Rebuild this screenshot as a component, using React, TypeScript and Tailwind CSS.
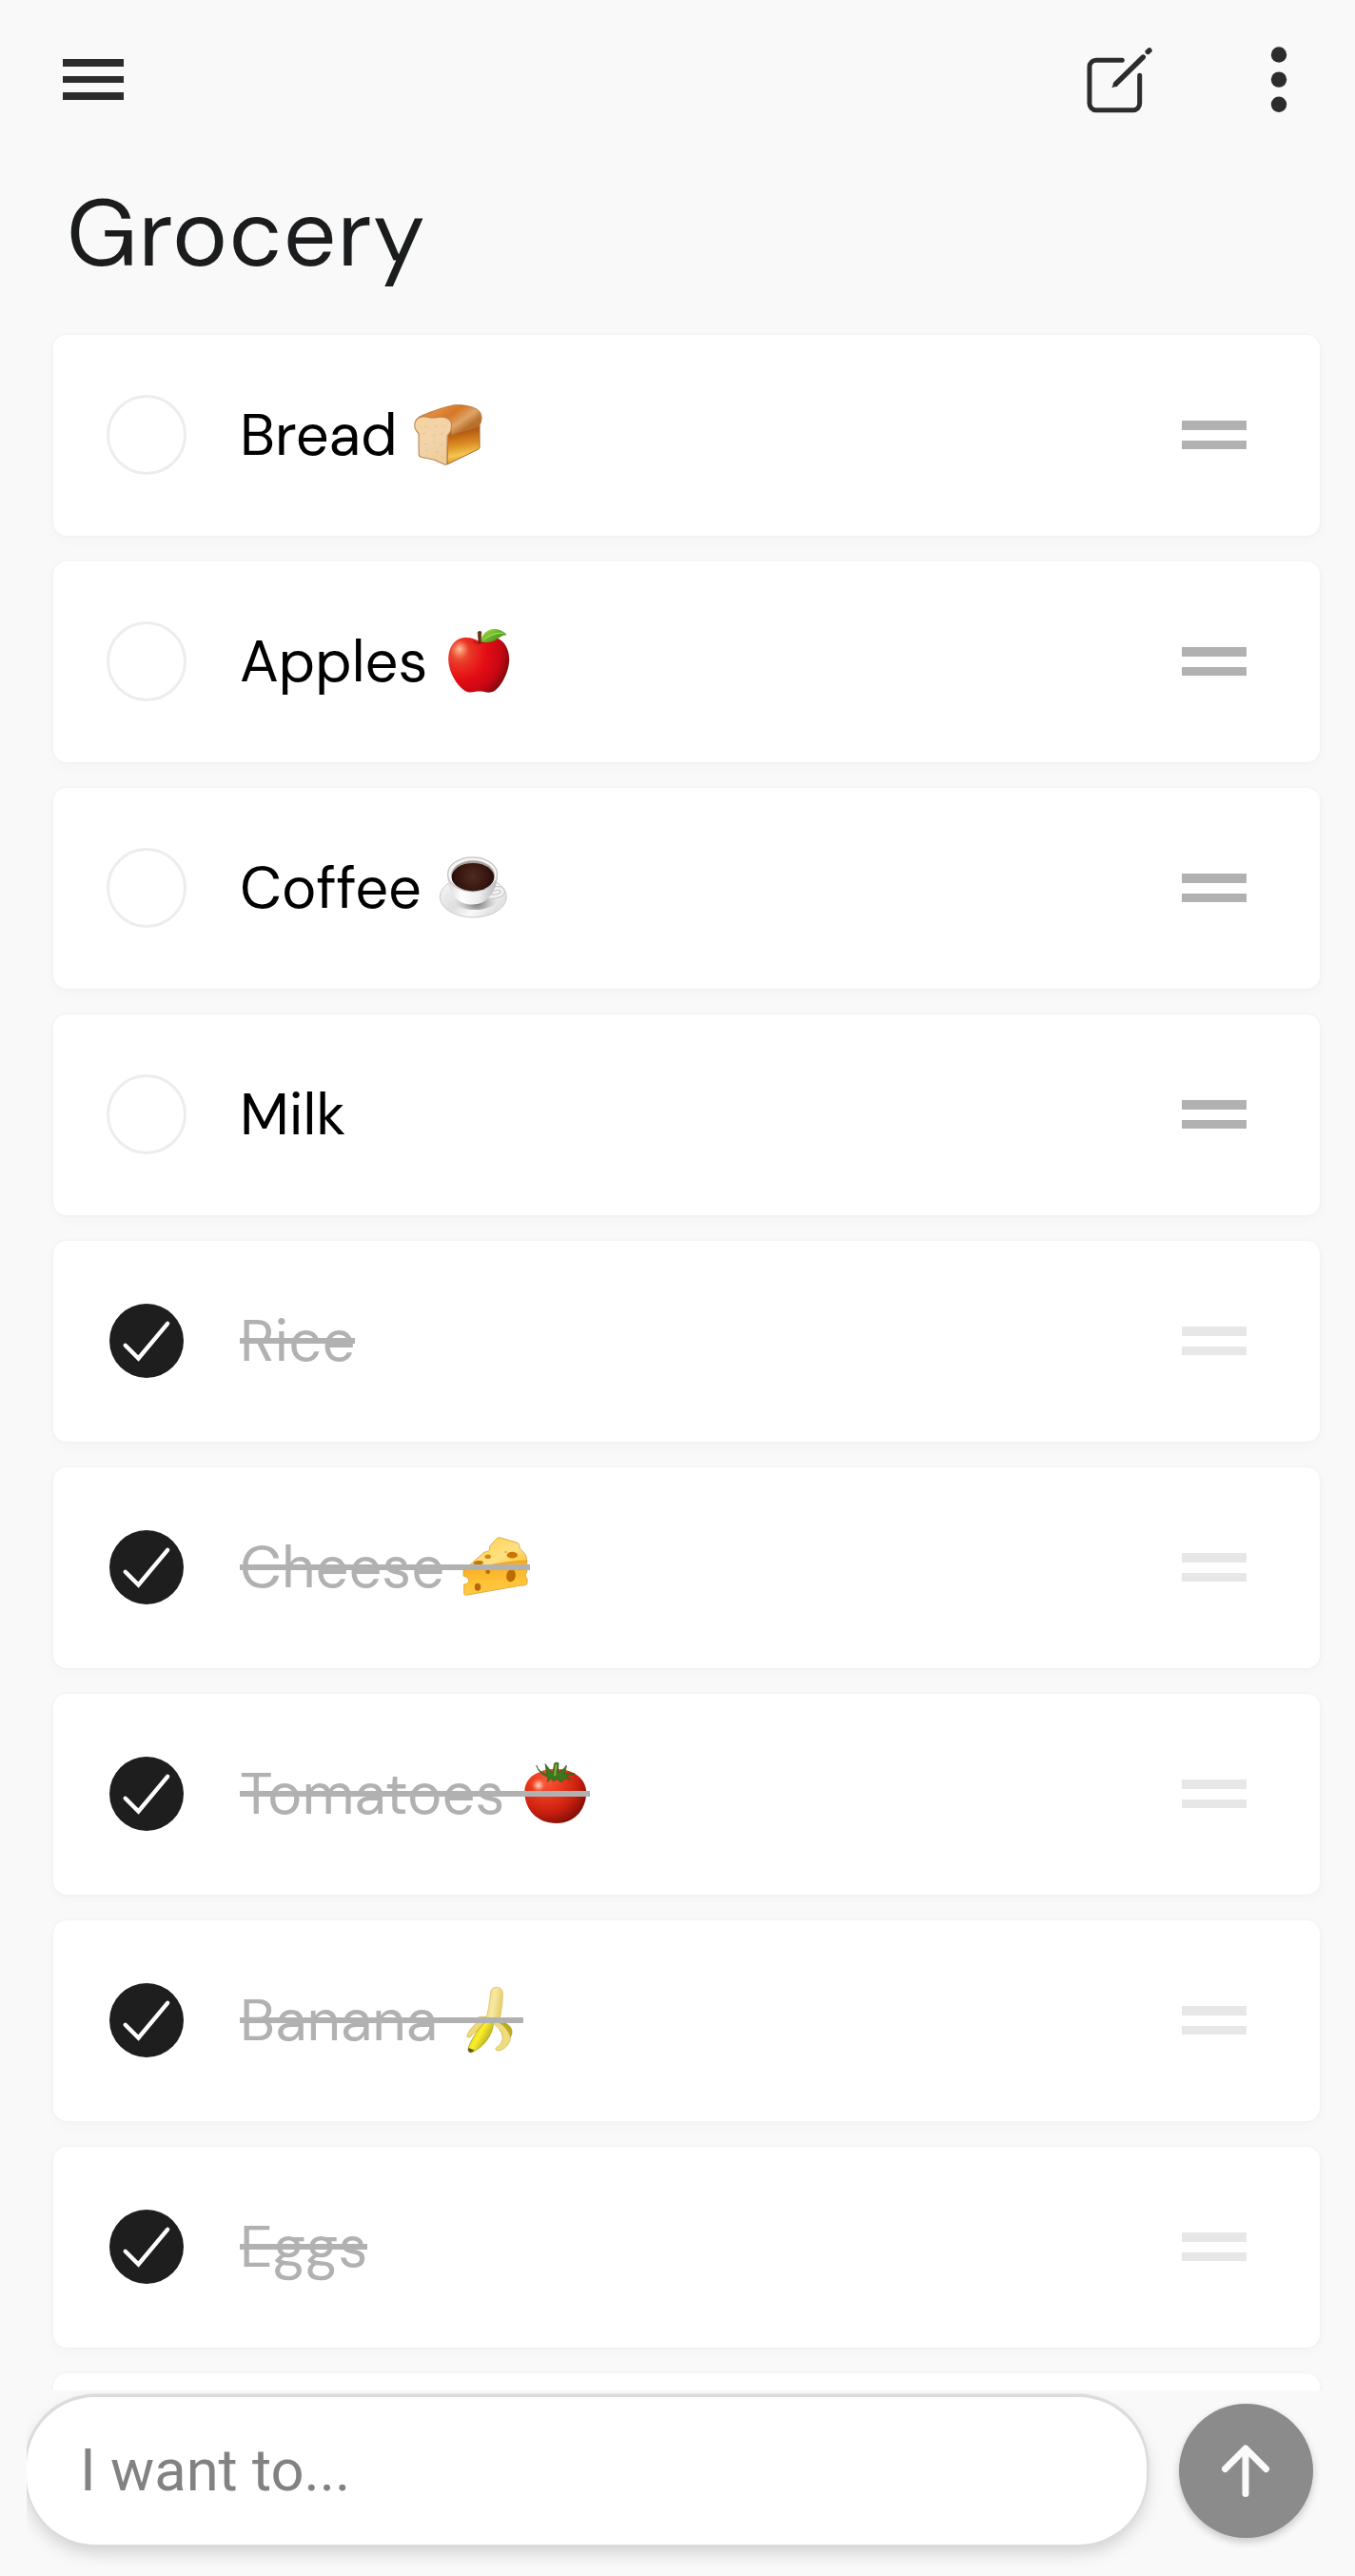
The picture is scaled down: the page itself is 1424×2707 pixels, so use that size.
import type { ReactNode } from 'react';

function Emoji({ label, children }: { label: string; children: ReactNode }) {
  return (
    <svg role="img" aria-label={label} className="h-[72px] w-[72px] shrink-0 overflow-visible" viewBox="0 0 72 72" fill="none">
      {children}
    </svg>
  );
}

function Bread() {
  return (
    <Emoji label="bread">
      <defs>
        <linearGradient id="breadSide" x1="50" y1="24" x2="56" y2="62" gradientUnits="userSpaceOnUse">
          <stop stopColor="#b8722d" />
          <stop offset=".22" stopColor="#b5590f" />
          <stop offset=".55" stopColor="#d98b22" />
          <stop offset=".85" stopColor="#f5c64f" />
          <stop offset="1" stopColor="#dfa036" />
        </linearGradient>
        <linearGradient id="breadTop" x1="32" y1="6" x2="50" y2="32" gradientUnits="userSpaceOnUse">
          <stop stopColor="#e08a3c" />
          <stop offset=".35" stopColor="#d67728" />
          <stop offset=".72" stopColor="#dfa467" />
          <stop offset="1" stopColor="#b9702c" />
        </linearGradient>
        <linearGradient id="breadFace" x1="6" y1="18" x2="34" y2="66" gradientUnits="userSpaceOnUse">
          <stop stopColor="#f6d3a0" />
          <stop offset=".5" stopColor="#f2d4aa" />
          <stop offset="1" stopColor="#edcb98" />
        </linearGradient>
      </defs>
      <path d="M36 30 69 20v29c0 1-.6 1.700-1.500 2.200L35 67z" fill="url(#breadSide)" stroke="#a8672c" strokeWidth="1" />
      <path d="M5 17.500C8 15 36 5 44 4.600c10-.4 20 2.400 23.500 5.400 4 3.600 4 9 3 12-.6 2.600-1.800 4-3.500 5L39.500 36 38 24z" fill="url(#breadTop)" stroke="#b8743a" strokeWidth=".9" />
      <path d="M5 34.500C1 31 0 26 1.500 22c2-5 8-6.500 14-4.500 4 1.300 7 .3 11-.2 8-.9 13.500 3 13 9.200-.1 4-1 7.500-4.300 10l-.4 29c0 1.800-1.300 2.200-2.800 1.600L22 62.500c-5-1.500-10-2-14-3-2-.4-2.800-1.400-2.800-3z" fill="url(#breadFace)" stroke="#bd834c" strokeWidth="1.100" />
      <path d="m11 27 3 1m8-2 2 2m6 0 2-1M9 35l3-1m8 2 3 1m5-1 3-2M10 45l4 1m6-2 3-1m5 4 3-1M12 53l3-1m8 3 3-2m3 7 2-1" stroke="#dcb98a" strokeWidth="1.200" opacity=".6" />
    </Emoji>
  );
}

function Apple() {
  return (
    <Emoji label="apple">
      <defs>
        <radialGradient id="appleBody" cx="16" cy="27" r="56" gradientUnits="userSpaceOnUse">
          <stop stopColor="#ee6a41" />
          <stop offset=".22" stopColor="#e93425" />
          <stop offset=".5" stopColor="#e50d14" />
          <stop offset=".78" stopColor="#c70713" />
          <stop offset="1" stopColor="#790a0d" />
        </radialGradient>
        <radialGradient id="appleShine" cx="16" cy="23" r="11" gradientUnits="userSpaceOnUse">
          <stop stopColor="#ffc5a5" />
          <stop offset="1" stopColor="#f5764e" stopOpacity="0" />
        </radialGradient>
        <linearGradient id="appleLeaf" x1="44" y1="4" x2="52" y2="16" gradientUnits="userSpaceOnUse">
          <stop stopColor="#93d33f" />
          <stop offset="1" stopColor="#4a971b" />
        </linearGradient>
      </defs>
      <path d="M36.500 14.800c3-2 8-4.300 14-4 11 .6 18 11 17.700 23.700-.4 14-9 28-15.200 32.300-4 2.500-8 2-11 1.200-3-.6-7-.6-10 0-4 .8-8 .8-11.500-1.800C13 61 4.500 47 4.200 34.500 4 22 10 12 21 11c6-.5 12 1.500 15.500 3.800z" fill="url(#appleBody)" />
      <ellipse cx="16" cy="23" rx="9" ry="11" fill="url(#appleShine)" transform="rotate(28 16 23)" />
      <path d="M30 15c3 2.600 10 2.600 14-.4" stroke="#8d0b0d" strokeWidth="1.500" opacity=".55" />
      <path d="M38 15.500C39 8 44 3 51 2c6-.6 11 2 14.800 6.200-5-.6-8 3-11.800 5.400-5 3-11 2.800-16 1.900z" fill="url(#appleLeaf)" />
      <path d="M41 13.500C47 8.500 54 5.500 62 6.500" stroke="#b4e36b" strokeWidth="1" />
      <path d="M35.200 5.200c1-.9 2.800-.9 3.600-.2L38 16.500h-1.800z" fill="#6d3319" stroke="#4c2313" strokeWidth=".7" />
    </Emoji>
  );
}

function Coffee() {
  return (
    <Emoji label="coffee">
      <defs>
        <linearGradient id="saucer" x1="10" y1="28" x2="48" y2="68" gradientUnits="userSpaceOnUse">
          <stop stopColor="#f4f4f4" />
          <stop offset=".45" stopColor="#dedede" />
          <stop offset=".75" stopColor="#fafafa" />
          <stop offset="1" stopColor="#e2e2e2" />
        </linearGradient>
        <linearGradient id="cupBody" x1="10" y1="34" x2="62" y2="40" gradientUnits="userSpaceOnUse">
          <stop stopColor="#dcdcdc" />
          <stop offset=".3" stopColor="#fff" />
          <stop offset=".65" stopColor="#ececec" />
          <stop offset="1" stopColor="#b5b5b5" />
        </linearGradient>
        <radialGradient id="brew" cx="36" cy="24" r="22" gradientUnits="userSpaceOnUse">
          <stop stopColor="#4e2a20" />
          <stop offset=".7" stopColor="#371610" />
          <stop offset="1" stopColor="#260d09" />
        </radialGradient>
        <radialGradient id="cupShade" cx="40" cy="50" r="22" gradientUnits="userSpaceOnUse">
          <stop stopColor="#666" />
          <stop offset="1" stopColor="#999" stopOpacity="0" />
        </radialGradient>
      </defs>
      <ellipse cx="36.300" cy="45.500" rx="35" ry="21.500" fill="url(#saucer)" stroke="#c9c9c9" strokeWidth="1" />
      <ellipse cx="38" cy="48" rx="24" ry="11" fill="url(#cupShade)" />
      <path d="M58 37.500c4-2 9-1 9.300 2.200.2 4-6.500 6-15.300 5.500" stroke="#c4c4c4" strokeWidth="5" strokeLinecap="round" />
      <path d="M58 37.500c4-2 9-1 9.300 2.200.2 4-6.500 6-15.300 5.500" stroke="#f1f1f1" strokeWidth="3" strokeLinecap="round" />
      <path d="M9.500 22c0 10 3 19 8 24.500C22 51 28 53.500 35 53.500c8 0 14-3 18-7.500 5-6 8.700-14 8.700-24z" fill="url(#cupBody)" />
      <ellipse cx="35.600" cy="21.800" rx="26" ry="18" fill="#f5f5f5" stroke="#c5c5c5" strokeWidth="1.300" />
      <ellipse cx="36" cy="22.800" rx="22.800" ry="15.600" fill="#a7a29d" />
      <ellipse cx="36" cy="24.700" rx="22.300" ry="14.700" fill="url(#brew)" />
    </Emoji>
  );
}

function Cheese() {
  return (
    <Emoji label="cheese">
      <defs>
        <linearGradient id="cheeseTop" x1="30" y1="8" x2="46" y2="38" gradientUnits="userSpaceOnUse">
          <stop stopColor="#ffd65f" />
          <stop offset=".6" stopColor="#ffe182" />
          <stop offset="1" stopColor="#ffcb48" />
        </linearGradient>
        <linearGradient id="cheeseFront" x1="36" y1="32" x2="38" y2="62" gradientUnits="userSpaceOnUse">
          <stop stopColor="#f9ac20" />
          <stop offset=".6" stopColor="#ffc135" />
          <stop offset="1" stopColor="#ffca45" />
        </linearGradient>
      </defs>
      <path d="M2 39.500 24 20c2-.6 4-.2 5.300-2 .7-1.500-.3-3 .7-4.500l7-7.800c1-1 2.500-1 4-.7L58 10c2.400.8 2.800 2 3 4.300 0 2.200 1.400 3.200 3 4.700 3 2.500 4.700 6 4.700 11z" fill="url(#cheeseTop)" stroke="#d8a53d" strokeWidth=".9" />
      <path d="M2 39.500c17-4 43-9.500 66.700-10.500v12.500c-1.800.6-1.800 5.500.4 6.300v3.500c0 2.600-1.300 3.500-4 3.700l-6.600.6c-1.500.3-2.500 1.600-4.200.9L5.500 65.200c-1.800.4-2.800-.2-2.800-2V54c3.800-.5 5.300-2.500 4.900-4.800-.5-2.200-3.300-3.400-5.600-4.200z" fill="url(#cheeseFront)" stroke="#dd9a27" strokeWidth=".8" />
      <ellipse cx="17.700" cy="31.300" rx="5.200" ry="2.200" fill="#c67706" transform="rotate(-7 17.700 31.300)" />
      <ellipse cx="27.700" cy="24.800" rx="3.200" ry="2.300" fill="#d28710" />
      <ellipse cx="53.300" cy="23.200" rx="5.600" ry="3.400" fill="#c67706" />
      <circle cx="46.500" cy="20" r="1" fill="#d49a27" />
      <ellipse cx="27.700" cy="40.500" rx="2.300" ry="2.500" fill="#b96b05" />
      <ellipse cx="52" cy="44.800" rx="4.800" ry="6.600" fill="#bc6c05" transform="rotate(10 52 44.800)" />
      <ellipse cx="17" cy="56.800" rx="3.200" ry="4" fill="#b86705" />
    </Emoji>
  );
}

function Tomato() {
  return (
    <Emoji label="tomato">
      <defs>
        <radialGradient id="tomatoBody" cx="26" cy="22" r="48" gradientUnits="userSpaceOnUse">
          <stop stopColor="#f7583a" />
          <stop offset=".35" stopColor="#ea3a1f" />
          <stop offset=".7" stopColor="#c9200f" />
          <stop offset="1" stopColor="#860e08" />
        </radialGradient>
        <radialGradient id="tomatoShine" cx="18" cy="27" r="8" gradientUnits="userSpaceOnUse">
          <stop stopColor="#ffd8cb" />
          <stop offset=".35" stopColor="#ff9a80" />
          <stop offset="1" stopColor="#f55b3b" stopOpacity="0" />
        </radialGradient>
      </defs>
      <path d="M20 13c4-2.500 9-3.200 16-3 8 0 15 1.500 20 4.800 8 4.700 12.200 12 12.200 20.200C68 50 58 67 37 67 16 67 3.300 52 3.300 34 3.300 24 10 15.500 20 13z" fill="url(#tomatoBody)" />
      <circle cx="18" cy="27" r="8" fill="url(#tomatoShine)" />
      <path d="M15.700 6c2.300 5.500 6 8.300 11 9.500L25 4.500c3.500 4 5 7.500 8 9.500L34.500 4c.6-1 3.600-1 4.500-.2L38.500 14C42 12 45 9 47.500 6c-.5 4-1.700 6.500-3 8.500 4 .6 8-.6 11.500.4-3 1.500-6 1.600-8.500 2.100l4 4.500c-3-.8-5.500-1.300-8-1.200L43 24l-6-3.500-3.300 2.500-2-3L27 23.500l1-5C22 16.500 17.500 12.500 15.700 6z" fill="#3c761f" stroke="#2f5f16" strokeWidth=".7" />
      <path d="m36.500 5-1.500 12" stroke="#7fae45" strokeWidth="2" />
    </Emoji>
  );
}

function Banana() {
  return (
    <Emoji label="banana">
      <defs>
        <linearGradient id="bananaFlesh" x1="33" y1="18" x2="51" y2="21" gradientUnits="userSpaceOnUse">
          <stop stopColor="#ecd678" />
          <stop offset=".4" stopColor="#f7e9a3" />
          <stop offset="1" stopColor="#e2c95d" />
        </linearGradient>
        <linearGradient id="bananaPeel" x1="17" y1="50" x2="35" y2="60" gradientUnits="userSpaceOnUse">
          <stop stopColor="#d9cd1c" />
          <stop offset=".4" stopColor="#faf02c" />
          <stop offset="1" stopColor="#b5a81a" />
        </linearGradient>
      </defs>
      <path d="M46 38c8-.5 13.500 4 14 10 0 4-2 6.500-5 8.500-2-6-5-12-9-18.500z" fill="#b9ad1d" stroke="#9f941c" strokeWidth=".7" />
      <path d="M36 33c-5-1.500-11-1.200-13 1.200-1 1.600 0 3 1.200 4-5 3-10 9-11.600 14.800.5 1 2.500 1.600 4 .4C21 48 27 43 37 39z" fill="#eed976" stroke="#cdb657" strokeWidth=".7" />
      <path d="M37.700 6C38.500 2.500 41 1 44.500 1.300c4 .4 6 3.200 5.900 6.700-.3 10-1.400 20-3.900 29L32.500 35c3-9 4-19 5.200-29z" fill="url(#bananaFlesh)" stroke="#d9c267" strokeWidth=".8" />
      <path d="M31.500 38.500C37 36.500 41.500 37.500 40 43 37.500 53.500 31 62 23.500 66.500c-2 1-4 3-6 3.500-2 0-4-1.500-3.500-4 1-4 3-8 6-13 3.300-5.500 7-10.500 11.500-14.500z" fill="url(#bananaPeel)" stroke="#a99e1a" strokeWidth=".8" />
      <path d="m14.500 65 6 2.500c-2 1.800-3.600 2.500-5 2-1.700-.5-1.700-2.500-1-4.500z" fill="#5e5923" />
      <path d="M39.500 39c5-2.300 9.500.5 12.500 4 3.500 4 6 8 6.300 11.500C58 60 53.500 66 47 67.800c-2.500.4-4.500-.6-4.200-2.300 5-3.500 8-7.500 7.300-12.500C49 47.500 45 42 39.500 39z" fill="#efdc7f" stroke="#cdb657" strokeWidth=".8" />
    </Emoji>
  );
}

type Item = { name: string; done?: boolean; emoji?: ReactNode };

const items: Item[] = [
  { name: 'Bread', emoji: <Bread /> },
  { name: 'Apples', emoji: <Apple /> },
  { name: 'Coffee', emoji: <Coffee /> },
  { name: 'Milk' },
  { name: 'Rice', done: true },
  { name: 'Cheese', done: true, emoji: <Cheese /> },
  { name: 'Tomatoes', done: true, emoji: <Tomato /> },
  { name: 'Banana', done: true, emoji: <Banana /> },
  { name: 'Eggs', done: true },
];

const cardClass =
  'shrink-0 rounded-[14px] bg-white shadow-[0_0_4px_rgba(0,0,0,0.05),0_6px_14px_rgba(0,0,0,0.018)]';

function Row({ name, done, emoji }: Item) {
  return (
    <li className={`${cardClass} flex h-[210.5px] items-center pr-[76.5px] pl-[56px]`}>
      <span className="flex h-[84px] w-[84px] shrink-0 items-center justify-center">
        {done ? (
          <svg className="h-[78px] w-[78px]" viewBox="0 0 78 78" fill="none">
            <circle cx="39" cy="39" r="39" fill="#1e1e1e" />
            <path d="m16.700 43.800 13.800 13.700 30.600-36.700" stroke="#fff" strokeWidth="4.400" strokeLinecap="round" />
          </svg>
        ) : (
          <span className="h-[84px] w-[84px] rounded-full border-[3px] border-[#ededed]" />
        )}
      </span>
      <span className="relative ml-14 flex items-center gap-[17.5px]">
        <span className={`mb-px text-[61.5px] leading-[80px] ${done ? 'text-[#b1b1b1]' : 'text-black'}`}>{name}</span>
        {emoji}
        {done && <span className="absolute top-1/2 right-0 left-0 -mt-[3px] h-[6px] bg-[#b1b1b1]" />}
      </span>
      <span className="ml-auto flex w-[68px] flex-col gap-[11px]">
        <span className={`h-[9.5px] ${done ? 'bg-[#e7e7e7]' : 'bg-[#b1b1b1]'}`} />
        <span className={`h-[9.5px] ${done ? 'bg-[#e7e7e7]' : 'bg-[#b1b1b1]'}`} />
      </span>
    </li>
  );
}

export default function App() {
  return (
    <main className="flex h-[2707px] w-[1424px] flex-col overflow-hidden bg-[#f9f9f9] font-['DM_Sans',Inter,sans-serif]">
      <header className="flex h-[167px] shrink-0 items-center pr-[69px] pl-[66px]">
        <div className="flex w-16 flex-col gap-[10px]">
          <span className="h-[7.5px] bg-[#2c2c2c]" />
          <span className="h-[7.5px] bg-[#2c2c2c]" />
          <span className="h-[7.5px] bg-[#2c2c2c]" />
        </div>
        <svg className="ml-auto h-[72px] w-[72px]" viewBox="1140 47 72 72" fill="none" stroke="#2c2c2c" strokeWidth="5" strokeLinecap="round">
          <path d="M1179.300 62.300h-27.300a7 7 0 0 0-7 7v38.400a7 7 0 0 0 7 7h38.700a7 7 0 0 0 7-7v-29.500" />
          <path d="M1172.500 87.300 1201.300 59" strokeWidth="5.400" />
          <path d="M1168.300 91.200 1171 85.400 1174.600 89.200z" fill="#2c2c2c" stroke="none" />
          <path d="m1206.300 53.400 1.600-1.400" strokeWidth="5.600" />
        </svg>
        <svg className="ml-[123.5px] h-[72px] w-5 overflow-visible" viewBox="0 0 20 72" fill="#2c2c2c">
          <circle cx="9" cy="9.500" r="8.200" />
          <circle cx="9" cy="35.600" r="8.200" />
          <circle cx="9" cy="61.800" r="8.200" />
        </svg>
      </header>
      <h1 className="h-[173px] shrink-0 pt-[15px] pl-[70px] text-[98px] leading-[128px] tracking-[1.2px] text-[#1b1c1d]">Grocery</h1>

      <ul className="flex h-[2172px] shrink-0 flex-col gap-[27.5px] overflow-hidden pt-3 pr-[37.5px] pl-14">
        {items.map((item) => (
          <Row key={item.name} {...item} />
        ))}
        <li className={`${cardClass} h-[210px]`} />
      </ul>

      <footer className="flex flex-1 items-start">
        <div className="ml-7 h-[195px] w-[1200px] overflow-hidden pt-[6.5px]">
          <div className="flex h-[155.5px] w-[1176.5px] items-center rounded-[72px] bg-white pl-14 shadow-[0_-1px_0_2.5px_#dcdcdc,0_8px_18px_rgba(0,0,0,0.17)]">
            <span className="font-['Roboto',sans-serif] text-[61.5px] leading-[80px] text-[#828282]">I want to...</span>
          </div>
        </div>
        <button className="mt-[14px] ml-[11px] flex h-[140.5px] w-[140.5px] items-center justify-center rounded-full bg-[#8b8b8b] shadow-[0_4px_9px_rgba(0,0,0,0.2)]">
          <svg className="h-[60px] w-[60px]" viewBox="0 0 60 60" fill="none" stroke="#fafafa" strokeWidth="7" strokeLinecap="round" strokeLinejoin="round">
            <path d="M30 54.500V7M8.500 28.500 30 7l21.500 21.500" />
          </svg>
        </button>
      </footer>
    </main>
  );
}
